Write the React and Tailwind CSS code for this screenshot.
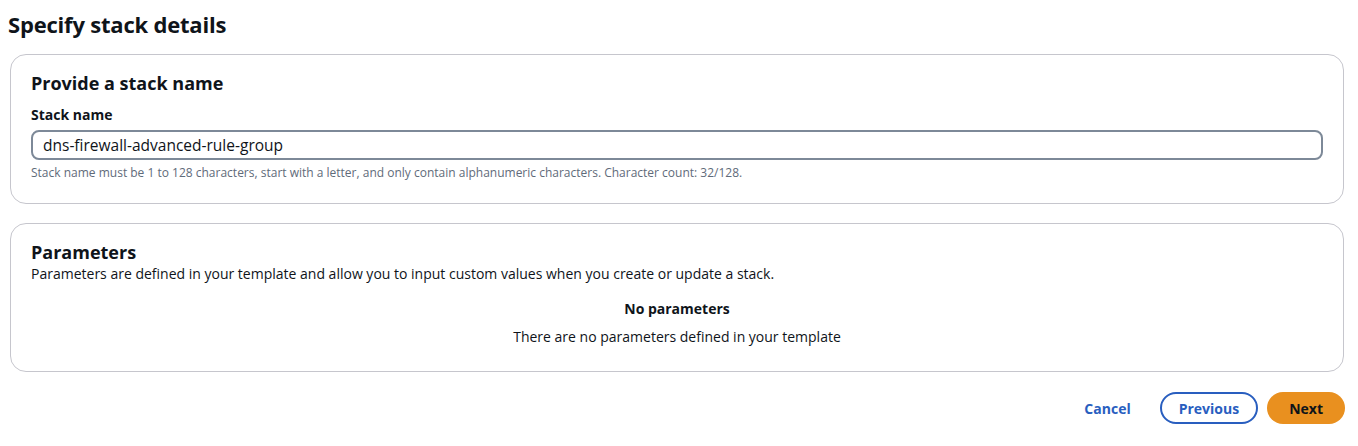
import React from 'react';

const font = { fontFamily: '"Open Sans", "Noto Sans", sans-serif' };

const Card = ({ children, className = '' }) => (
  <section className={`rounded-2xl border border-[#c6c6cd] bg-white px-5 pt-4 ${className}`}>
    {children}
  </section>
);

export default function App() {
  return (
    <div className="min-h-[446px] bg-white text-[#0f141a] pl-[10px] pr-[14px] pt-2" style={font}>
      <h1 className="text-[22px] font-bold leading-8 -ml-0.5 tracking-[-0.2px]">Specify stack details</h1>

      <div className="mt-[14px] flex flex-col gap-[19px]">
        <Card className="pb-[22px]">
          <h2 className="text-[18px] font-bold leading-6 pt-0">Provide a stack name</h2>
          <label className="block mt-[10px] text-[14px] font-bold leading-5">Stack name</label>
          <input
            readOnly
            value="dns-firewall-advanced-rule-group"
            className="mt-[5px] block w-full h-[30px] rounded-lg border-2 border-[#7d8998] px-[10px] text-[15.5px] text-[#0f141a] outline-none"
          />
          <p className="mt-[5px] text-[12px] leading-4 text-[#5f6b7a]">
            Stack name must be 1 to 128 characters, start with a letter, and only contain alphanumeric characters. Character count: 32/128.
          </p>
        </Card>

        <Card className="pb-6">
          <h2 className="text-[18px] font-bold leading-6 pt-0">Parameters</h2>
          <p className="text-[14px] leading-5 mt-0">
            Parameters are defined in your template and allow you to input custom values when you create or update a stack.
          </p>
          <div className="mt-[15px] text-center text-[14px] leading-5">
            <p className="font-bold">No parameters</p>
            <p className="mt-2">There are no parameters defined in your template</p>
          </div>
        </Card>
      </div>

      <div className="mt-[20px] flex justify-end items-center gap-[9px] -mr-px">
        <button className="px-5 h-8 rounded-full text-[14px] font-bold text-[#295ebf]">Cancel</button>
        <button className="px-[17px] h-[32px] rounded-full border-2 border-[#295ebf] text-[14px] font-bold text-[#295ebf]">Previous</button>
        <button className="px-[22px] h-[32px] rounded-full bg-[#e9901f] text-[14px] font-bold text-[#0f141a]">Next</button>
      </div>
    </div>
  );
}
